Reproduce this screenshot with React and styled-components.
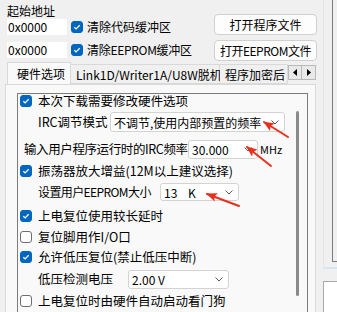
import React from "react"
import styled, { createGlobalStyle } from "styled-components"

const Global = createGlobalStyle`
  html, body { margin: 0; padding: 0; background: #f0f0f0; }
  body {
    font-family: "Noto Sans CJK SC", "Noto Sans", sans-serif;
    font-size: 12px;
    color: #000;
  }
`

const Page = styled.div`
  position: relative;
  width: 337px;
  height: 312px;
  overflow: hidden;
  display: flex;
  background: #f0f0f0;
`

const Main = styled.div`
  width: 318px;
  flex: none;
  display: flex;
  flex-direction: column;
`

const Top = styled.div`
  height: 62px;
  display: flex;
  justify-content: space-between;
  padding-left: 7px;
  padding-right: 1px;
`

const LeftCol = styled.div`
  padding-top: 4px;
  display: flex;
  flex-direction: column;
`

const Caption = styled.div`
  height: 14px;
  line-height: 14px;
  font-size: 12px;
`

const AddrRow = styled.div`
  height: 18px;
  margin-top: ${p => p.$gap || 0}px;
  display: flex;
  align-items: center;
`

const AddrInput = styled.div`
  width: 60px;
  height: 16px;
  background: #fff;
  line-height: 16px;
  padding-left: 1px;
  box-sizing: border-box;
  font-size: 12px;
  margin-right: 4px;
`

const Label = styled.span`
  white-space: nowrap;
  line-height: 16px;
  font-size: ${p => p.$size || 12}px;
  letter-spacing: ${p => p.$ls || 0}px;
  margin-left: ${p => p.$ml || 0}px;
  width: ${p => (p.$w ? p.$w + "px" : "auto")};
  flex: none;
`

const RightCol = styled.div`
  padding-top: 14px;
  display: flex;
  flex-direction: column;
  gap: 5px;
`

const Button = styled.div`
  width: 103px;
  height: 21px;
  box-sizing: border-box;
  border: 1px solid #d0d0d0;
  border-radius: 4px;
  background: #fdfdfd;
  display: flex;
  align-items: center;
  justify-content: center;
  font-size: 12px;
  letter-spacing: ${p => p.$ls || 0}px;
  white-space: nowrap;
`

const TabStrip = styled.div`
  height: 22px;
  display: flex;
  padding-left: 7px;
`

const TabsClip = styled.div`
  width: 281px;
  display: flex;
  align-items: flex-end;
  overflow: hidden;
`

const Tab = styled.div`
  flex: none;
  box-sizing: border-box;
  height: ${p => (p.$active ? 23 : 20)}px;
  margin-bottom: ${p => (p.$active ? -1 : 0)}px;
  position: relative;
  z-index: ${p => (p.$active ? 1 : 0)};
  width: ${p => p.$w}px;
  padding-left: ${p => p.$pl}px;
  background: ${p => (p.$active ? "#f9f9f9" : "#f0f0f0")};
  border: 1px solid #d9d9d9;
  border-bottom: ${p => (p.$active ? "none" : "1px solid #d9d9d9")};
  border-left: ${p => (p.$first ? "1px solid #d9d9d9" : "none")};
  display: flex;
  align-items: center;
  padding-bottom: ${p => (p.$active ? 2 : 0)}px;
  white-space: nowrap;
  font-size: 12px;
`

const Spinner = styled.div`
  display: flex;
  margin-top: 3px;
  height: 15px;
`

const SpinBtn = styled.div`
  width: 14px;
  height: 15px;
  box-sizing: border-box;
  border: 1px solid #b9b9b9;
  border-left: ${p => (p.$right ? "none" : "1px solid #b9b9b9")};
  background: #e9e9e9;
  display: flex;
  align-items: center;
  justify-content: center;
`

const TabPanel = styled.div`
  flex: 1;
  margin-left: 5px;
  width: 311px;
  box-sizing: border-box;
  background: #f9f9f9;
  border: 1px solid #d9d9d9;
  border-bottom: none;
  padding: 8px 7px 0 11px;
  display: flex;
`

const Group = styled.div`
  flex: 1;
  border: 1px solid #7c7c7c;
  border-bottom: none;
  display: flex;
`

const Content = styled.div`
  flex: 1;
  display: flex;
  flex-direction: column;
`

const Row = styled.div`
  height: ${p => p.$h}px;
  flex: none;
  display: flex;
  align-items: center;
  padding-left: ${p => p.$indent}px;
`

const Track = styled.div`
  width: 13px;
  flex: none;
  padding-top: 17px;
`

const Thumb = styled.div`
  width: 3px;
  height: 185px;
  margin-left: 2px;
  border-radius: 2px;
  background: #8a8a8a;
`

const CheckBox = styled.span`
  width: 12px;
  height: 12px;
  flex: none;
  box-sizing: border-box;
  border-radius: 3px;
  border: 1px solid ${p => (p.$checked ? "#0067c0" : "#6f6f6f")};
  background: ${p => (p.$checked ? "#0067c0" : "#fff")};
  display: inline-flex;
  align-items: center;
  justify-content: center;
  margin-right: ${p => p.$mr || 6}px;
`

const Combo = styled.div`
  width: ${p => p.$w}px;
  height: ${p => p.$h || 20}px;
  flex: none;
  margin-left: ${p => p.$ml || 0}px;
  box-sizing: border-box;
  background: #fff;
  border: 1px solid #d3d3d3;
  border-radius: 3px;
  display: flex;
  align-items: center;
  justify-content: space-between;
  padding: 0 5px 0 3px;
  font-size: 12px;
  white-space: pre;
`

const Side = styled.div`
  flex: 1;
  display: flex;
  flex-direction: column;
`

const SideUpper = styled.div`
  height: 265px;
  margin-left: 5px;
  border-left: 1px solid #e3e3e3;
  padding-left: 8px;
`

const SideGroup = styled.div`
  height: 262px;
  box-sizing: border-box;
  border-left: 1px solid #7c7c7c;
  border-bottom: 1px solid #7c7c7c;
`

const SideRule = styled.div`
  margin: 2px 0 0 5px;
  height: 2px;
  background: #d3e6f5;
`

const SideBox = styled.div`
  flex: 1;
  margin: 12px 0 0 5px;
  background: #fff;
  border-left: 1px solid #a9a9a9;
  border-top: 1px solid #a9a9a9;
`

const Marks = styled.svg`
  position: absolute;
  left: 0;
  top: 0;
  pointer-events: none;
`

function Check({ on, mr }) {
  return (
    <CheckBox $checked={on} $mr={mr}>
      {on && (
        <svg width="8" height="8" viewBox="0 0 8 8">
          <polyline points="1.3,4.2 3.1,5.9 6.7,2.2" fill="none" stroke="#fff" strokeWidth="1.3" />
        </svg>
      )}
    </CheckBox>
  )
}

function Chevron() {
  return (
    <svg width="8" height="5" viewBox="0 0 8 5">
      <polyline points="0.5,0.5 4,4 7.5,0.5" fill="none" stroke="#5a5a5a" strokeWidth="1" />
    </svg>
  )
}

function Tri({ dir }) {
  return (
    <svg width="4" height="7" viewBox="0 0 4 7">
      {dir === "left" ? <polygon points="4,0 0,3.5 4,7" fill="#000" /> : <polygon points="0,0 4,3.5 0,7" fill="#000" />}
    </svg>
  )
}

const arrows = [
  [288, 137, 264, 122],
  [271, 166, 247, 147],
  [239, 206, 207, 194],
]

export default function App() {
  return (
    <>
      <Global />
      <Page>
        <Main>
          <Top>
            <LeftCol>
              <Caption>起始地址</Caption>
              <AddrRow>
                <AddrInput>0x0000</AddrInput>
                <Check on mr={4} />
                <Label>清除代码缓冲区</Label>
              </AddrRow>
              <AddrRow $gap={5}>
                <AddrInput>0x0000</AddrInput>
                <Check on mr={4} />
                <Label $ls={-0.3}>清除EEPROM缓冲区</Label>
              </AddrRow>
            </LeftCol>
            <RightCol>
              <Button>打开程序文件</Button>
              <Button $ls={-0.5}>打开EEPROM文件</Button>
            </RightCol>
          </Top>

          <TabStrip>
            <TabsClip>
              <Tab $active $first $w={64} $pl={9}>硬件选项</Tab>
              <Tab $w={149} $pl={5}>Link1D/Writer1A/U8W脱机</Tab>
              <Tab $w={68} $pl={5}>程序加密后</Tab>
            </TabsClip>
            <Spinner>
              <SpinBtn><Tri dir="left" /></SpinBtn>
              <SpinBtn $right><Tri dir="right" /></SpinBtn>
            </Spinner>
          </TabStrip>

          <TabPanel>
            <Group>
              <Content>
                <Row $h={14} $indent={2}>
                  <Check on />
                  <Label $size={12.5}>本次下载需要修改硬件选项</Label>
                </Row>
                <Row $h={28} $indent={20}>
                  <Label $size={12.5} $w={72}>IRC调节模式</Label>
                  <Combo $w={175}>
                    <span>不调节,使用内部预置的频率</span>
                    <Chevron />
                  </Combo>
                </Row>
                <Row $h={26} $indent={6}>
                  <Label $size={12.5} $ls={-0.4} $w={164}>输入用户程序运行时的IRC频率</Label>
                  <Combo $w={70} $h={19}>
                    <span>30.000</span>
                    <Chevron />
                  </Combo>
                  <Label $size={11} $ml={2}>MHz</Label>
                </Row>
                <Row $h={18} $indent={2}>
                  <Check on />
                  <Label $size={12.5}>振荡器放大增益(12M以上建议选择)</Label>
                </Row>
                <Row $h={24} $indent={20}>
                  <Label $size={12} $ls={-0.6} $w={122}>设置用户EEPROM大小</Label>
                  <Combo $w={79} $h={18}>
                    <span>13    K</span>
                    <Chevron />
                  </Combo>
                </Row>
                <Row $h={24} $indent={2}>
                  <Check on />
                  <Label $size={12.5}>上电复位使用较长延时</Label>
                </Row>
                <Row $h={18} $indent={2}>
                  <Check />
                  <Label $size={12.5}>复位脚用作I/O口</Label>
                </Row>
                <Row $h={22} $indent={2}>
                  <Check on />
                  <Label $size={12.5}>允许低压复位(禁止低压中断)</Label>
                </Row>
                <Row $h={22} $indent={20}>
                  <Label $size={12.5} $w={90}>低压检测电压</Label>
                  <Combo $w={101} $h={19}>
                    <span>2.00 V</span>
                    <Chevron />
                  </Combo>
                </Row>
                <Row $h={22} $indent={2}>
                  <Check />
                  <Label $size={12.5}>上电复位时由硬件自动启动看门狗</Label>
                </Row>
              </Content>
              <Track>
                <Thumb />
              </Track>
            </Group>
          </TabPanel>
        </Main>

        <Side>
          <SideUpper>
            <SideGroup />
          </SideUpper>
          <SideRule />
          <SideBox />
        </Side>

        <Marks width="337" height="312" viewBox="0 0 337 312">
          <defs>
            <marker id="head" viewBox="0 0 10 8" refX="9" refY="4" markerWidth="5.5" markerHeight="4.4" orient="auto">
              <polygon points="0,0 10,4 0,8 2,4" fill="#e8301f" />
            </marker>
          </defs>
          {arrows.map(([x1, y1, x2, y2], i) => (
            <line key={i} x1={x1} y1={y1} x2={x2} y2={y2} stroke="#e8301f" strokeWidth="2" strokeLinecap="round" markerEnd="url(#head)" />
          ))}
        </Marks>
      </Page>
    </>
  )
}
